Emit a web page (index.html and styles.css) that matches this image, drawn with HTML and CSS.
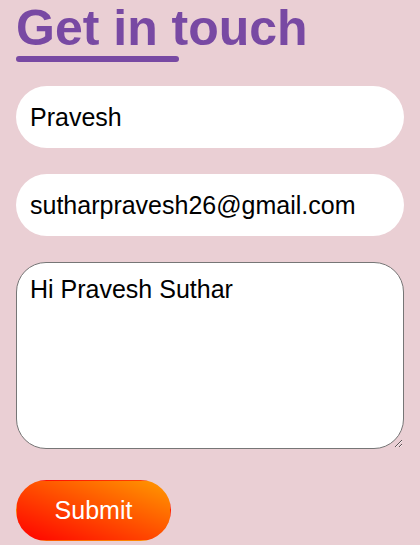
FILE: index.html
```html
<!DOCTYPE html>
<html lang="en">
<head>
<meta charset="utf-8">
<title>Get in touch</title>
<link rel="stylesheet" href="styles.css">
</head>
<body>
<main class="contact">
  <h1 class="contact__title">Get in touch</h1>
  <div class="contact__bar"></div>
  <form class="contact__form">
    <input class="field field--name" type="text" value="Pravesh">
    <input class="field field--email" type="email" value="sutharpravesh26@gmail.com">
    <textarea class="field field--message">Hi Pravesh Suthar</textarea>
    <button class="submit" type="button">Submit</button>
  </form>
</main>
</body>
</html>
```
FILE: styles.css
```css
html, body {
  margin: 0;
  padding: 0;
}

body {
  background: #eacfd4;
  font-family: "Liberation Sans", Arial, sans-serif;
}

.contact {
  padding: 0 16px;
}

.contact__title {
  margin: 0;
  font-size: 50px;
  line-height: 56px;
  font-weight: 700;
  color: #7849a3;
}

.contact__bar {
  width: 163px;
  height: 6px;
  border-radius: 3px;
  background: #7849a3;
}

.contact__form {
  display: flex;
  flex-direction: column;
  align-items: flex-start;
  margin-top: 24px;
}

.field {
  box-sizing: border-box;
  width: 100%;
  margin: 0;
  font-family: "Liberation Sans", Arial, sans-serif;
  font-size: 25px;
  color: #000;
  background: #fff;
  outline: none;
}

.field--name,
.field--email {
  height: 62px;
  padding: 0 14px;
  border: none;
  border-radius: 31px;
}

.field--name {
  margin-bottom: 26px;
}

.field--email {
  margin-bottom: 26px;
}

.field--message {
  height: 187px;
  padding: 12px 13px;
  border: 1px solid #767676;
  border-radius: 30px;
  resize: both;
}

.submit {
  margin-top: 31px;
  width: 155px;
  height: 61px;
  border: 1px solid transparent;
  border-radius: 31px;
  background: linear-gradient(to top right, #ff0000, #ff9a00);
  color: #fff;
  font-family: "Liberation Sans", Arial, sans-serif;
  font-size: 25px;
  cursor: pointer;
}
```
